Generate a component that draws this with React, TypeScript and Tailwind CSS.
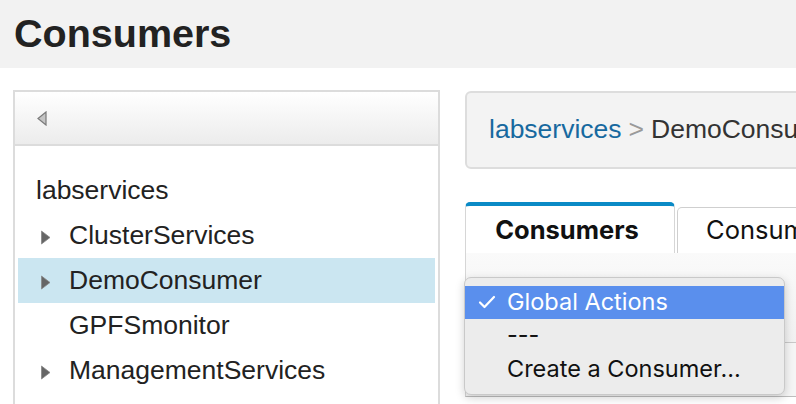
import React from "react";

const treeItems = [
  { label: "labservices", arrow: false, indent: false },
  { label: "ClusterServices", arrow: true, indent: true },
  { label: "DemoConsumer", arrow: true, indent: true, selected: true },
  { label: "GPFSmonitor", arrow: false, indent: true },
  { label: "ManagementServices", arrow: true, indent: true },
  { label: "SampleApplications", arrow: true, indent: true },
];

function RightTri() {
  return (
    <svg width="10" height="15" viewBox="0 0 10 15" className="shrink-0 mt-[3px]">
      <polygon points="0.5,1 9,7.5 0.5,14" fill="#666" stroke="#888" strokeWidth="0.8" />
    </svg>
  );
}

export default function App() {
  return (
    <div
      className="relative w-[796px] h-[404px] overflow-hidden bg-white text-[#222]"
      style={{ fontFamily: '"Liberation Sans", Arial, sans-serif' }}
    >
      {/* Page header */}
      <div className="h-[68px] bg-[#f2f2f2] flex items-center pl-[14px]">
        <h1 className="text-[39.5px] font-bold leading-none text-[#222]">Consumers</h1>
      </div>

      <div className="flex pt-[22px] pl-[13px] gap-[25px]">
        {/* Tree panel */}
        <div className="w-[427px] shrink-0 border-2 border-[#dcdcdc] h-[400px]">
          <div className="h-[54px] bg-gradient-to-b from-white to-[#ececec] border-b-2 border-[#dcdcdc] flex items-center pl-[22px]">
            <svg width="10" height="15" viewBox="0 0 10 15">
              <polygon points="9,1 1,7.5 9,14" fill="#c4c4c4" stroke="#7a7a7a" strokeWidth="1.2" />
            </svg>
          </div>
          <div className="pt-[22px] px-[3px]">
            {treeItems.map((it) => (
              <div
                key={it.label}
                className={`h-[45px] flex items-center text-[26.5px] whitespace-nowrap ${it.selected ? "bg-[#cbe6f1]" : ""} ${
                  it.indent ? "pl-[23px]" : "pl-[18px]"
                }`}
              >
                {it.indent && (
                  <span className="w-[28px] shrink-0 flex items-center">{it.arrow && <RightTri />}</span>
                )}
                <span>{it.label}</span>
              </div>
            ))}
          </div>
        </div>

        {/* Right content */}
        <div className="w-[400px] shrink-0">
          <div className="h-[78px] mt-[1px] w-[400px] rounded-[6px] border-2 border-[#dddddd] bg-[#f3f3f3] flex items-center pl-[22px] text-[26.5px] whitespace-nowrap">
            <span className="text-[#17699f]">labservices</span>
            <span className="text-[#9a9a9a] mx-[7px]">&gt;</span>
            <span className="text-[#333]">DemoConsumer</span>
          </div>

          <div className="mt-[33px] flex items-end gap-[2px]">
            <div className="w-[210px] shrink-0 h-[51px] border-t-4 border-[#0a8ac6] border-x border-x-[#d6d6d6] rounded-t-[5px] bg-white flex items-center justify-center">
              <span
                className="text-[25.5px] font-bold text-[#111] pr-[6px] mt-[2px]"
                style={{ fontFamily: 'Inter, "Liberation Sans", sans-serif' }}
              >
                Consumers
              </span>
            </div>
            <div className="w-[200px] shrink-0 h-[46px] border border-[#cfcfcf] border-b-0 rounded-t-[5px] bg-white flex items-center pl-[28px]">
              <span
                className="text-[25.5px] text-[#111] whitespace-nowrap"
                style={{ fontFamily: 'Inter, "Liberation Sans", sans-serif' }}
              >
                Consumer Properties
              </span>
            </div>
          </div>
          <div className="border-l border-[#d6d6d6] bg-gradient-to-b from-[#fafafa] to-[#f1f1f1] h-[90px] border-b border-b-[#c8c8c8]" />
          <div className="h-[54px] bg-[#f5f5f5] border-l border-[#d6d6d6] border-b border-b-[#bdbdbd]" />
        </div>
      </div>

      {/* Native select popup */}
      <div
        className="absolute left-[464px] top-[277px] w-[321px] h-[118px] rounded-[7px] bg-[#ececec] border border-[#c9c9c9] shadow-[0_3px_10px_rgba(0,0,0,0.18)] pt-[8px] text-[23.5px] text-[#111]"
        style={{ fontFamily: 'Inter, "Liberation Sans", sans-serif' }}
      >
        <div className="h-[33px] bg-[#5a8fed] text-white flex items-center pb-[2px]">
          <span className="w-[42px] flex justify-center pl-[1px]">
            <svg width="18" height="14" viewBox="0 0 18 14">
              <path d="M2 7.5 L6.5 12 L16 2" fill="none" stroke="white" strokeWidth="2.2" strokeLinecap="round" strokeLinejoin="round" />
            </svg>
          </span>
          <span>Global Actions</span>
        </div>
        <div className="h-[34px] flex items-center pl-[42px] pb-[2px]">---</div>
        <div className="h-[34px] flex items-center pl-[42px] pb-[2px]">Create a Consumer...</div>
      </div>
    </div>
  );
}
